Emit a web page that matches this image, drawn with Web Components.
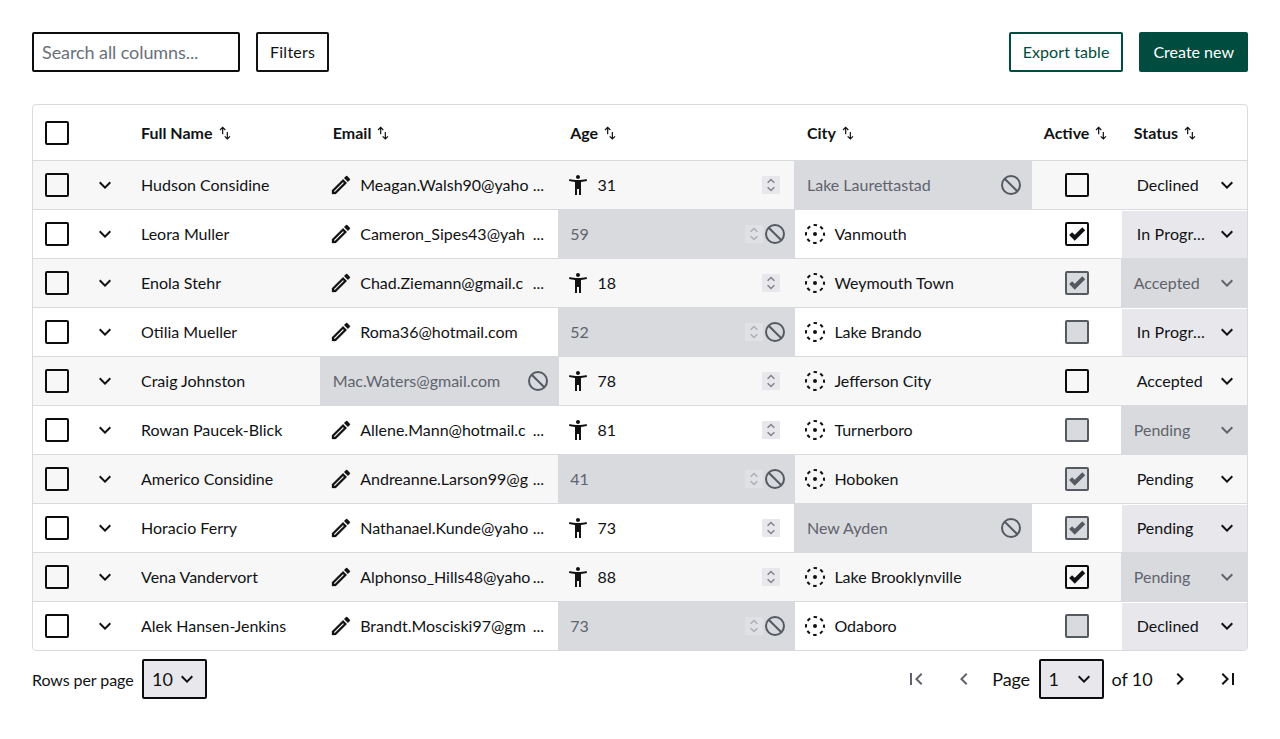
<!DOCTYPE html>
<html lang="en">
<head>
<meta charset="utf-8">
<title>People</title>
<style>
body{margin:0;background:#fff;color:#111214;font:16px/24px Lato,"Liberation Sans",sans-serif}
</style>
</head>
<body>
<people-page></people-page>
<script>
const ICONS={
 edit:'<path d="M3 17.25V21h3.75L17.81 9.94l-3.75-3.75L3 17.25zM5.92 19H5v-.92l9.06-9.06.92.92L5.92 19zM20.71 5.63l-2.34-2.34c-.2-.2-.45-.29-.71-.29s-.51.1-.7.29l-1.83 1.83 3.75 3.75 1.83-1.83c.39-.39.39-1.02 0-1.41z" stroke="currentColor" stroke-width=".3"/>',
 person:'<path d="M20.5 6c-2.61.7-5.67 1-8.5 1s-5.89-.3-8.5-1L3 8c1.86.5 4 .83 6 1v13h2v-6h2v6h2V9c2-.17 4.14-.5 6-1l-.5-2zM12 6c1.1 0 2-.9 2-2s-.9-2-2-2-2 .9-2 2 .9 2 2 2z"/>',
 block:'<g fill="none" stroke="currentColor" stroke-width="2"><circle cx="12" cy="12" r="9"/><path d="M5.7 5.7l12.6 12.6"/></g>',
 target:'<circle cx="12" cy="12" r="9" fill="none" stroke="currentColor" stroke-width="2" stroke-dasharray="3.534 3.534" stroke-dashoffset="1.767"/><circle cx="12" cy="12" r="2"/>',
 down:'<path d="M7.41 8.59 12 13.17l4.59-4.58L18 10l-6 6-6-6z"/>',
 left:'<path d="M15.41 7.41 14 6l-6 6 6 6 1.41-1.41L10.83 12z"/>',
 right:'<path d="M8.59 16.59 10 18l6-6-6-6-1.41 1.41L13.17 12z"/>',
 first:'<path d="M18.41 16.59 13.82 12l4.59-4.59L17 6l-6 6 6 6zM6 6h2v12H6z"/>',
 last:'<path d="M5.59 7.41 10.18 12l-4.59 4.59L7 18l6-6-6-6zM16 6h2v12h-2z"/>',
 sort:'<g fill="none" stroke="currentColor" stroke-width="1.800"><path d="M8.500 14V4M4.500 7.500l4-4 4 4M15.500 10.500v10M11.500 17l4 4 4-4"/></g>',
 spin:'<path d="M7.500 9 12 4.700 16.500 9M7.500 15l4.500 4.300 4.500-4.300" fill="none" stroke="currentColor" stroke-width="2.200"/>',
 check:'<path d="M3.500 11.500l5.500 5.500L21 5" fill="none" stroke="currentColor" stroke-width="5.500"/>'
};
function define(name,css,html){
 customElements.define(name,class extends HTMLElement{
  constructor(){super();this.attachShadow({mode:'open'});}
  connectedCallback(){this.shadowRoot.innerHTML='<style>*{box-sizing:border-box}'+css+'</style>'+(typeof html==='function'?html(this):html);}
 });
}
define('ui-icon',':host{display:block;flex:none;width:24px;height:24px}svg{display:block;width:100%;height:100%;fill:currentColor}',
 e=>'<svg viewBox="0 0 24 24">'+ICONS[e.getAttribute('name')]+'</svg>');
define('ui-button',':host{display:flex;box-sizing:border-box;height:40px;border:2px solid currentColor;border-radius:2px;padding:0 12px;align-items:center;color:#111214;letter-spacing:.250px}:host([outline]){color:#004d40;letter-spacing:.080px}:host([primary]){background:#004d40;border-color:#004d40;color:#fff;letter-spacing:0}','<slot></slot>');
define('ui-search',':host{display:flex;box-sizing:border-box;width:208px;height:40px;border:2px solid #0b0c0e;border-radius:2px;padding:0 8px;align-items:center;font-size:18px;color:#6b6f7c;letter-spacing:-.080px}','<slot></slot>');
define('ui-checkbox',':host{display:grid;box-sizing:border-box;width:24px;height:24px;border:2px solid #0b0c0e;border-radius:2px;place-items:center;flex:none}:host([disabled]){border-color:#555962;background:#d9dade;color:#555962}ui-icon{width:18px;height:18px}',
 e=>e.hasAttribute('checked')?'<ui-icon name="check"></ui-icon>':'');
define('ui-spinner',':host{display:block;width:18px;height:18px;background:#e8e8ec;color:#83868e;flex:none}:host([disabled]){opacity:.5}ui-icon{width:18px;height:18px}','<ui-icon name="spin"></ui-icon>');
define('ui-select',':host{display:flex;box-sizing:border-box;width:65px;height:40px;border:2px solid #0b0c0e;border-radius:2px;background:#e8e8ec;align-items:center;justify-content:space-between;padding:0 6px 0 8px;font-size:18px}','<slot></slot><ui-icon name="down"></ui-icon>');
define('sort-header',':host{display:flex;align-items:center;gap:4px;font-weight:700}ui-icon{width:16px;height:16px}','<slot></slot><ui-icon name="sort"></ui-icon>');
define('text-cell',`:host{display:flex;box-sizing:border-box;height:48px;align-items:center;padding-left:9px;white-space:nowrap;min-width:0}
 :host([kind=age]){padding-left:8.500px}:host([kind=age]) .v{padding-left:7.500px}
 :host([disabled]){background:#d9dade;color:#60636c;padding-left:12.600px;margin-top:-1px;height:49px;padding-top:1px}
 :host([disabled][kind=email]),:host([disabled][kind=age]){margin-right:-1px}
 .v{flex:1;min-width:0;padding-left:7px}:host([disabled]) .v{padding-left:0}
 .email{display:flex;justify-content:space-between;margin-right:13.600px}
 ui-icon.block{margin-right:8.700px;color:#555962}:host([kind=age]) ui-icon.block{margin-right:8px}
 ui-spinner{margin-right:14.400px}ui-spinner[disabled]{margin-right:0}`,
 e=>{const d=e.hasAttribute('disabled'),k=e.getAttribute('kind'),t=e.getAttribute('value'),c=e.hasAttribute('clipped');
 return (d?'':`<ui-icon name="${({email:'edit',age:'person',city:'target'})[k]}"></ui-icon>`)+`<span class="v ${k}"><span>${t}</span>${c?'<span>...</span>':''}</span>`+(k==='age'?`<ui-spinner ${d?'disabled':''}></ui-spinner>`:'')+(d?'<ui-icon class="block" name="block"></ui-icon>':'');});
define('status-cell',`:host{display:flex;box-sizing:border-box;height:48px;align-items:center;justify-content:space-between;padding:0 8px 0 15.500px;white-space:nowrap}
 :host([shade]){background:#e8e8ec;height:47px;margin:1px 0 0 1px;padding-left:14.500px;padding-bottom:1px}
 :host([long]){letter-spacing:.180px}
 :host([disabled]){background:#d9dade;color:#60636c;padding-left:12.600px;height:49px;margin-top:-1px;padding-top:1px}`,
 '<slot></slot><ui-icon name="down"></ui-icon>');
const COLS='48px 48px 191.2px 237.4px 236.8px 237.4px 89.4px 125.8px';
define('person-row',`:host{display:grid;grid-template-columns:${COLS};height:49px;align-items:start;border-bottom:1px solid #d9dade;box-sizing:border-box}
 :host(:nth-of-type(odd)){background:#f7f7f8}:host(:last-of-type){border-bottom:0;height:48px}
 .c{display:grid;height:48px;place-items:center}.act{padding-left:1px}.n{height:48px;display:flex;align-items:center;padding-left:12px}`,
 e=>{const [name,email,ed,age,ad,city,cd,act,status,st]=e.data;const dis=x=>x?'disabled':'';
 return `<div class="c"><ui-checkbox></ui-checkbox></div><div class="c"><ui-icon name="down"></ui-icon></div><div class="n">${name}</div>
 <text-cell kind="email" value="${email.replace('|','')}" ${email.includes('|')?'clipped':''} ${dis(ed)}></text-cell><text-cell kind="age" value="${age}" ${dis(ad)}></text-cell><text-cell kind="city" value="${city}" ${dis(cd)}></text-cell>
 <div class="c act"><ui-checkbox ${act}></ui-checkbox></div><status-cell ${st}>${status}</status-cell>`;});
const ROWS=[
['Hudson Considine','Meagan.Walsh90@yaho|',0,31,0,'Lake Laurettastad',1,'','Declined',''],
['Leora Muller','Cameron_Sipes43@yah|',0,59,1,'Vanmouth',0,'checked','In Progr...','shade long'],
['Enola Stehr','Chad.Ziemann@gmail.c|',0,18,0,'Weymouth Town',0,'checked disabled','Accepted','disabled'],
['Otilia Mueller','Roma36@hotmail.com',0,52,1,'Lake Brando',0,'disabled','In Progr...','shade long'],
['Craig Johnston','Mac.Waters@gmail.com',1,78,0,'Jefferson City',0,'','Accepted',''],
['Rowan Paucek-Blick','Allene.Mann@hotmail.c|',0,81,0,'Turnerboro',0,'disabled','Pending','disabled'],
['Americo Considine','Andreanne.Larson99@g|',0,41,1,'Hoboken',0,'checked disabled','Pending',''],
['Horacio Ferry','Nathanael.Kunde@yaho|',0,73,0,'New Ayden',1,'checked disabled','Pending','shade'],
['Vena Vandervort','Alphonso_Hills48@yaho|',0,88,0,'Lake Brooklynville',0,'checked','Pending','disabled'],
['Alek Hansen-Jenkins','Brandt.Mosciski97@gm|',0,73,1,'Odaboro',0,'disabled','Declined','shade']];
customElements.define('people-table',class extends HTMLElement{
 connectedCallback(){
  const r=this.attachShadow({mode:'open'});
  r.innerHTML=`<style>:host{display:block;border:1px solid #d9dade;border-radius:4px;overflow:hidden}
  .head{display:grid;grid-template-columns:${COLS};height:56px;box-sizing:border-box;border-bottom:1px solid #d9dade;align-items:center}
  .head ui-checkbox{margin:auto}sort-header{padding-left:12.600px}sort-header:first-of-type,sort-header:nth-of-type(5){padding-left:12px}</style>
  <div class="head"><ui-checkbox></ui-checkbox><span></span>${['Full Name','Email','Age','City','Active','Status'].map(t=>`<sort-header>${t}</sort-header>`).join('')}</div>`;
  ROWS.forEach(d=>{const p=document.createElement('person-row');p.data=d;r.append(p);});
 }});
define('page-controls',`:host{display:flex;height:40px;margin-top:8px;align-items:center}
 .label{padding-top:2px;letter-spacing:-.080px}
 .r{margin-left:auto;display:flex;align-items:center;font-size:18px}.size{margin-left:8.500px}.dim{color:#60636c}
 .r ui-select{margin:0 8px 0 8.500px}.of{letter-spacing:-.100px}.page{letter-spacing:-.100px}`,
 `<span class="label">Rows per page</span><ui-select class="size">10</ui-select>
 <div class="r"><ui-icon class="dim" name="first"></ui-icon><ui-icon class="dim" name="left" style="margin:0 16px 0 24px"></ui-icon><span class="page">Page</span><ui-select>1</ui-select><span class="of">of 10</span><ui-icon name="right" style="margin:0 24px 0 15.500px"></ui-icon><ui-icon name="last" style="margin-right:8px"></ui-icon></div>`);
define('people-page',':host{display:block;padding:32px}.bar{display:flex;gap:16px;margin-bottom:32px}.sp{flex:1;margin-right:-16px}',
 '<div class="bar"><ui-search>Search all columns...</ui-search><ui-button>Filters</ui-button><span class="sp"></span><ui-button outline>Export table</ui-button><ui-button primary>Create new</ui-button></div><people-table></people-table><page-controls></page-controls>');
</script>
</body>
</html>
